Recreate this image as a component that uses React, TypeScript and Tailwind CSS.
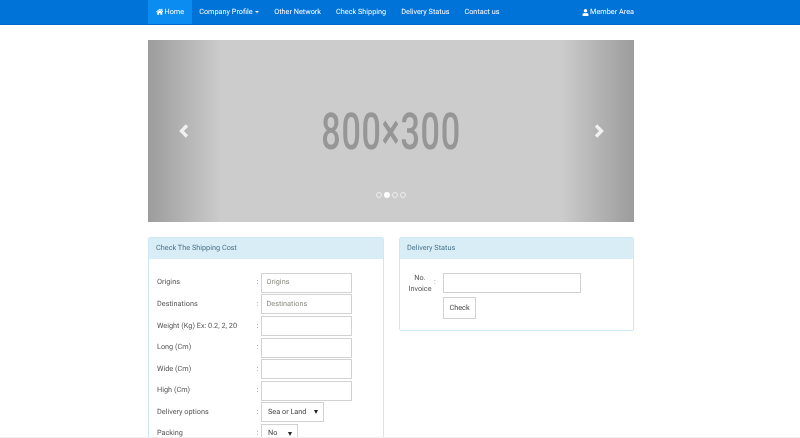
import React from "react";
import { FaHome, FaUser } from "react-icons/fa";

function NavItem({ children, active }: { children: React.ReactNode; active?: boolean }) {
  return (
    <a className={`flex items-center h-full px-[7.5px] text-[7.3px] text-white whitespace-nowrap ${active ? "bg-[#0a8cf0]" : ""}`}>
      {children}
    </a>
  );
}

function Row({ label, children }: { label: string; children: React.ReactNode }) {
  return (
    <div className="flex items-center h-[21.6px]">
      <div className="w-[99.5px] text-[7.3px] text-[#555555] whitespace-nowrap">{label}</div>
      <div className="w-[4.5px] text-[7.3px] text-[#777777]">:</div>
      {children}
    </div>
  );
}

function Field({ placeholder }: { placeholder?: string }) {
  return (
    <div className="w-[91px] h-[20px] border border-[#d2d2d2] px-[4.5px] flex items-center text-[7.3px] text-[#8a8a80] bg-white shrink-0">
      {placeholder}
    </div>
  );
}

function SelectBox({ value, w }: { value: string; w: string }) {
  return (
    <div className={`${w} h-[20px] border border-[#d2d2d2] pl-[6px] pr-[5px] flex items-center justify-between text-[7.3px] text-[#444444] bg-white shrink-0 whitespace-nowrap`}>
      <span>{value}</span>
      <span className="w-0 h-0 border-x-[2.5px] border-x-transparent border-t-[4px] border-t-[#222222]" />
    </div>
  );
}

function Chevron({ right }: { right?: boolean }) {
  return (
    <svg width="12" height="14" viewBox="0 0 12 14" className={`text-[#f0f0f0] ${right ? "ml-[2px]" : "mr-[2px]"}`}>
      <path
        d={right ? "M3 1.5 L8.5 7 L3 12.5" : "M9 1.5 L3.5 7 L9 12.5"}
        fill="none"
        stroke="currentColor"
        strokeWidth="3.4"
      />
    </svg>
  );
}

export default function App() {
  return (
    <div className="relative font-['Roboto',sans-serif] [text-rendering:geometricPrecision] [will-change:transform] w-[800px] h-[438px] overflow-hidden flex flex-col">
      <nav className="h-[25px] shrink-0 bg-[#0073d9] border-b border-[#0069c8]">
        <div className="w-[486px] h-full ml-[148px] flex items-center">
          <NavItem active>
            <FaHome className="w-[7.5px] h-[7.5px] mr-[1.5px]" />
            Home
          </NavItem>
          <NavItem>
            Company Profile
            <span className="ml-[2.5px] w-0 h-0 border-x-[2px] border-x-transparent border-t-[2px] border-t-white" />
          </NavItem>
          <NavItem>Other Network</NavItem>
          <NavItem>Check Shipping</NavItem>
          <NavItem>Delivery Status</NavItem>
          <NavItem>Contact us</NavItem>
          <a className="ml-auto flex items-center text-[7.3px] text-white whitespace-nowrap">
            <FaUser className="w-[7px] h-[7px] mr-[1.5px]" />
            Member Area
          </a>
        </div>
      </nav>

      <main className="w-[486px] ml-[148px] pt-[15px] flex flex-col gap-[15px]">
        <div className="relative h-[182px] bg-[#cccccc] overflow-hidden flex items-center justify-center pt-[2px]">
          <span className="font-medium text-[51px] leading-none text-[#969696] scale-x-[0.67] tracking-[1px] whitespace-nowrap">
            800×300
          </span>
          <div className="absolute inset-y-0 left-0 w-[73px] bg-gradient-to-r from-[#9c9c9c] to-[#cccccc] flex items-center justify-center">
            <Chevron />
          </div>
          <div className="absolute inset-y-0 right-0 w-[73px] bg-gradient-to-l from-[#9c9c9c] to-[#cccccc] flex items-center justify-center">
            <Chevron right />
          </div>
          <div className="absolute left-[228px] top-[152px] flex items-center gap-[2px]">
            <span className="w-[6px] h-[6px] rounded-full border border-[#eeeeee]" />
            <span className="w-[6px] h-[6px] rounded-full bg-white" />
            <span className="w-[6px] h-[6px] rounded-full border border-[#eeeeee]" />
            <span className="w-[6px] h-[6px] rounded-full border border-[#eeeeee]" />
          </div>
        </div>

        <div className="flex items-start gap-[15px]">
          <section className="w-[236px] shrink-0 border border-[#cdeaf3] rounded-[2px]">
            <div className="h-[21px] bg-[#d9edf7] px-[7px] flex items-center text-[7.3px] text-[#4a7488]">
              Check The Shipping Cost
            </div>
            <div className="pt-[13px] pl-[8px] flex flex-col">
              <Row label="Origins"><Field placeholder="Origins" /></Row>
              <Row label="Destinations"><Field placeholder="Destinations" /></Row>
              <Row label="Weight (Kg) Ex: 0.2, 2, 20"><Field /></Row>
              <Row label="Long (Cm)"><Field /></Row>
              <Row label="Wide (Cm)"><Field /></Row>
              <Row label="High (Cm)"><Field /></Row>
              <Row label="Delivery options"><SelectBox value="Sea or Land" w="w-[63px]" /></Row>
              <Row label="Packing"><SelectBox value="No" w="w-[37px]" /></Row>
            </div>
          </section>

          <section className="w-[235px] shrink-0 border border-[#cdeaf3] rounded-[2px]">
            <div className="h-[21px] bg-[#d9edf7] px-[7px] flex items-center text-[7.3px] text-[#4a7488]">
              Delivery Status
            </div>
            <div className="pt-[14px] pb-[11px] flex">
              <div className="w-[34px] ml-[3px] text-center text-[7.3px] leading-[10.5px] text-[#555555]">
                No. Invoice
              </div>
              <div className="w-[6px] -translate-x-[3px] text-[7.3px] text-[#777777] pt-[4px]">:</div>
              <div className="flex flex-col gap-[4px]">
                <div className="w-[138px] h-[20px] border border-[#d2d2d2]" />
                <div className="w-[33px] h-[22px] border border-[#d2d2d2] flex items-center justify-center text-[7.3px] text-[#444444]">
                  Check
                </div>
              </div>
            </div>
          </section>
        </div>
      </main>
      <div className="absolute inset-x-0 bottom-0 h-[1px] bg-[#eeeeee]" />
    </div>
  );
}
